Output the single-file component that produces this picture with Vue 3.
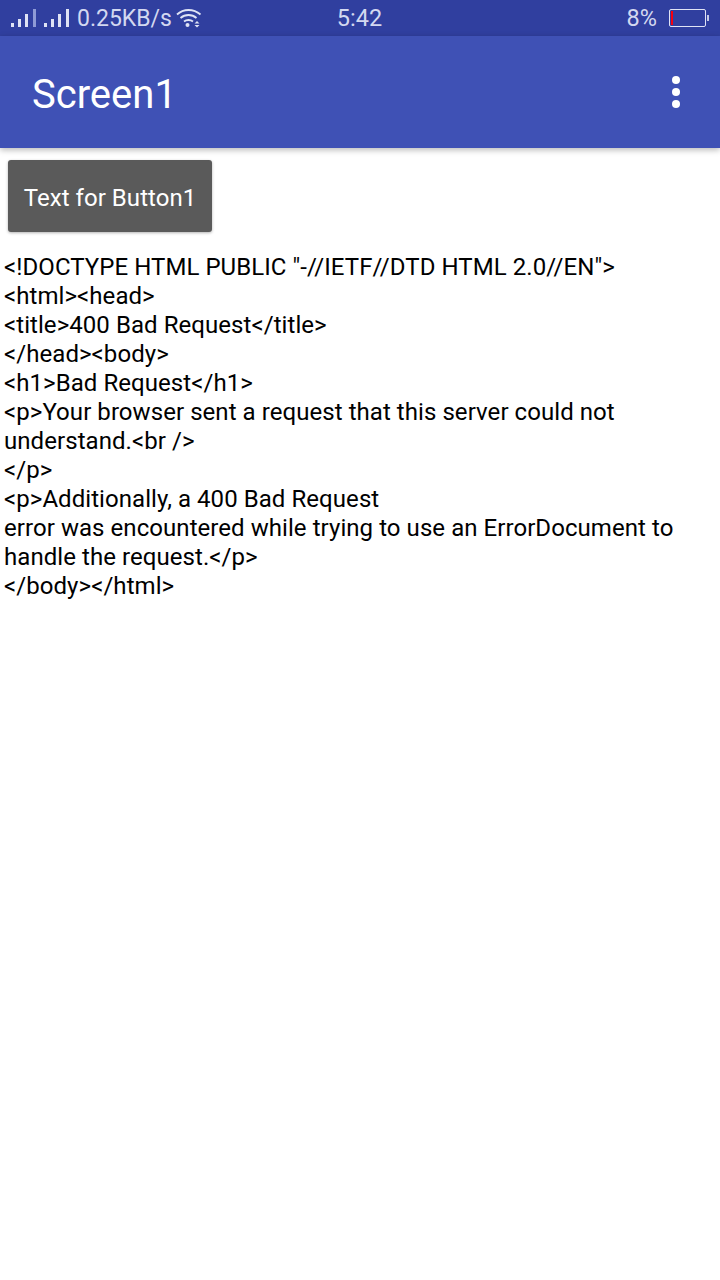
<template>
  <div class="screen">
    <div class="status-bar">
      <div class="status-left">
        <svg class="signal" width="28" height="18" viewBox="0 0 28 18">
          <rect x="0" y="14" width="3" height="4" fill="#dfe3f5" />
          <rect x="7" y="10" width="3" height="8" fill="#dfe3f5" />
          <rect x="14" y="5" width="3" height="13" fill="#dfe3f5" />
          <rect x="22" y="0" width="3" height="18" fill="#8f9bd6" />
        </svg>
        <svg class="signal second" width="28" height="18" viewBox="0 0 28 18">
          <rect x="0" y="14" width="3" height="4" fill="#dfe3f5" />
          <rect x="7" y="10" width="3" height="8" fill="#dfe3f5" />
          <rect x="14" y="5" width="3" height="13" fill="#dfe3f5" />
          <rect x="22" y="0" width="3" height="18" fill="#dfe3f5" />
        </svg>
        <span class="speed">0.25KB/s</span>
        <svg class="wifi" width="27" height="20" viewBox="0 0 27 20" fill="none" stroke="#dfe3f5" stroke-width="1.8">
          <path d="M1 6.5C7.5 .5 17.5 .5 24.500 6.500" />
          <path d="M4.500 10C9 6 16 6 20.500 10" />
          <path d="M8 13.500C10.500 11.500 14.500 11.500 17 13.500" />
          <circle cx="11.500" cy="17" r="2" fill="#dfe3f5" stroke="none" />
          <path d="M18.500 15.500l2.500 -2.500 2.500 2.500zM18.500 17l2.500 2.500 2.500 -2.500z" fill="#dfe3f5" stroke="none" />
        </svg>
      </div>
      <span class="clock">5:42</span>
      <div class="status-right">
        <span class="percent">8%</span>
        <div class="battery">
          <div class="battery-level"></div>
        </div>
        <div class="battery-cap"></div>
      </div>
    </div>

    <header class="app-bar">
      <span class="title">Screen1</span>
      <div class="overflow">
        <i></i>
        <i></i>
        <i></i>
      </div>
    </header>

    <main class="content">
      <button class="btn">Text for Button1</button>
      <div class="response">
        <div v-for="(line, i) in lines" :key="i">{{ line }}</div>
      </div>
    </main>
  </div>
</template>

<script setup>
const lines = [
  '<!DOCTYPE HTML PUBLIC "-//IETF//DTD HTML 2.0//EN">',
  '<html><head>',
  '<title>400 Bad Request</title>',
  '</head><body>',
  '<h1>Bad Request</h1>',
  '<p>Your browser sent a request that this server could not',
  'understand.<br />',
  '</p>',
  '<p>Additionally, a 400 Bad Request',
  'error was encountered while trying to use an ErrorDocument to',
  'handle the request.</p>',
  '</body></html>'
]
</script>

<style>
html, body {
  margin: 0;
  background: #fff;
}
</style>

<style scoped>
.screen {
  width: 720px;
  height: 1280px;
  background: #fff;
  font-family: Roboto, "Liberation Sans", sans-serif;
  overflow: hidden;
}

.status-bar {
  height: 36px;
  background: #303f9f;
  color: #d3d8f0;
  display: grid;
  grid-template-columns: 1fr auto 1fr;
  align-items: center;
  font-size: 23.5px;
}

.status-left {
  display: flex;
  align-items: center;
  padding-left: 11px;
}

.signal {
  display: block;
}

.signal.second {
  margin-left: 5px;
}

.speed {
  margin-left: 5px;
  font-size: 23px;
  white-space: nowrap;
}

.wifi {
  margin-left: 4px;
}

.clock {
  margin-left: -1px;
}

.status-right {
  display: flex;
  align-items: center;
  justify-content: flex-end;
  padding-right: 11px;
}

.percent {
  margin-right: 12px;
}

.battery {
  width: 32px;
  height: 14px;
  border: 1px solid #dfe3f5;
  border-radius: 2px;
  padding: 1px 2px 1px 1px;
  display: flex;
  box-sizing: content-box;
}

.battery-level {
  width: 2px;
  background: #f5000f;
}

.battery-cap {
  width: 2px;
  height: 6px;
  background: #c5cbe8;
  margin-left: 1px;
}

.app-bar {
  height: 112px;
  background: #3f51b5;
  display: flex;
  align-items: center;
  justify-content: space-between;
  padding: 0 40px 0 32px;
  box-shadow: 0 2px 6px rgba(0, 0, 0, 0.28);
  position: relative;
}

.title {
  color: #fff;
  font-size: 40px;
  margin-top: 4px;
}

.overflow {
  display: flex;
  flex-direction: column;
  gap: 4px;
}

.overflow i {
  display: block;
  width: 8px;
  height: 8px;
  background: #fff;
  border-radius: 50%;
}

.content {
  padding: 12px 4px 0;
}

.btn {
  display: block;
  margin-left: 4px;
  width: 204px;
  height: 72px;
  padding: 4px 0 0;
  border: 0;
  border-radius: 3px;
  background: #5a5a5a;
  color: #fff;
  font-family: inherit;
  font-size: 24px;
  letter-spacing: 0.05px;
  box-shadow: 0 1px 3px rgba(0, 0, 0, 0.3);
}

.response {
  margin-top: 21px;
  color: #000;
  font-size: 24px;
  letter-spacing: 0.06px;
  line-height: 29px;
  white-space: pre;
}
</style>
